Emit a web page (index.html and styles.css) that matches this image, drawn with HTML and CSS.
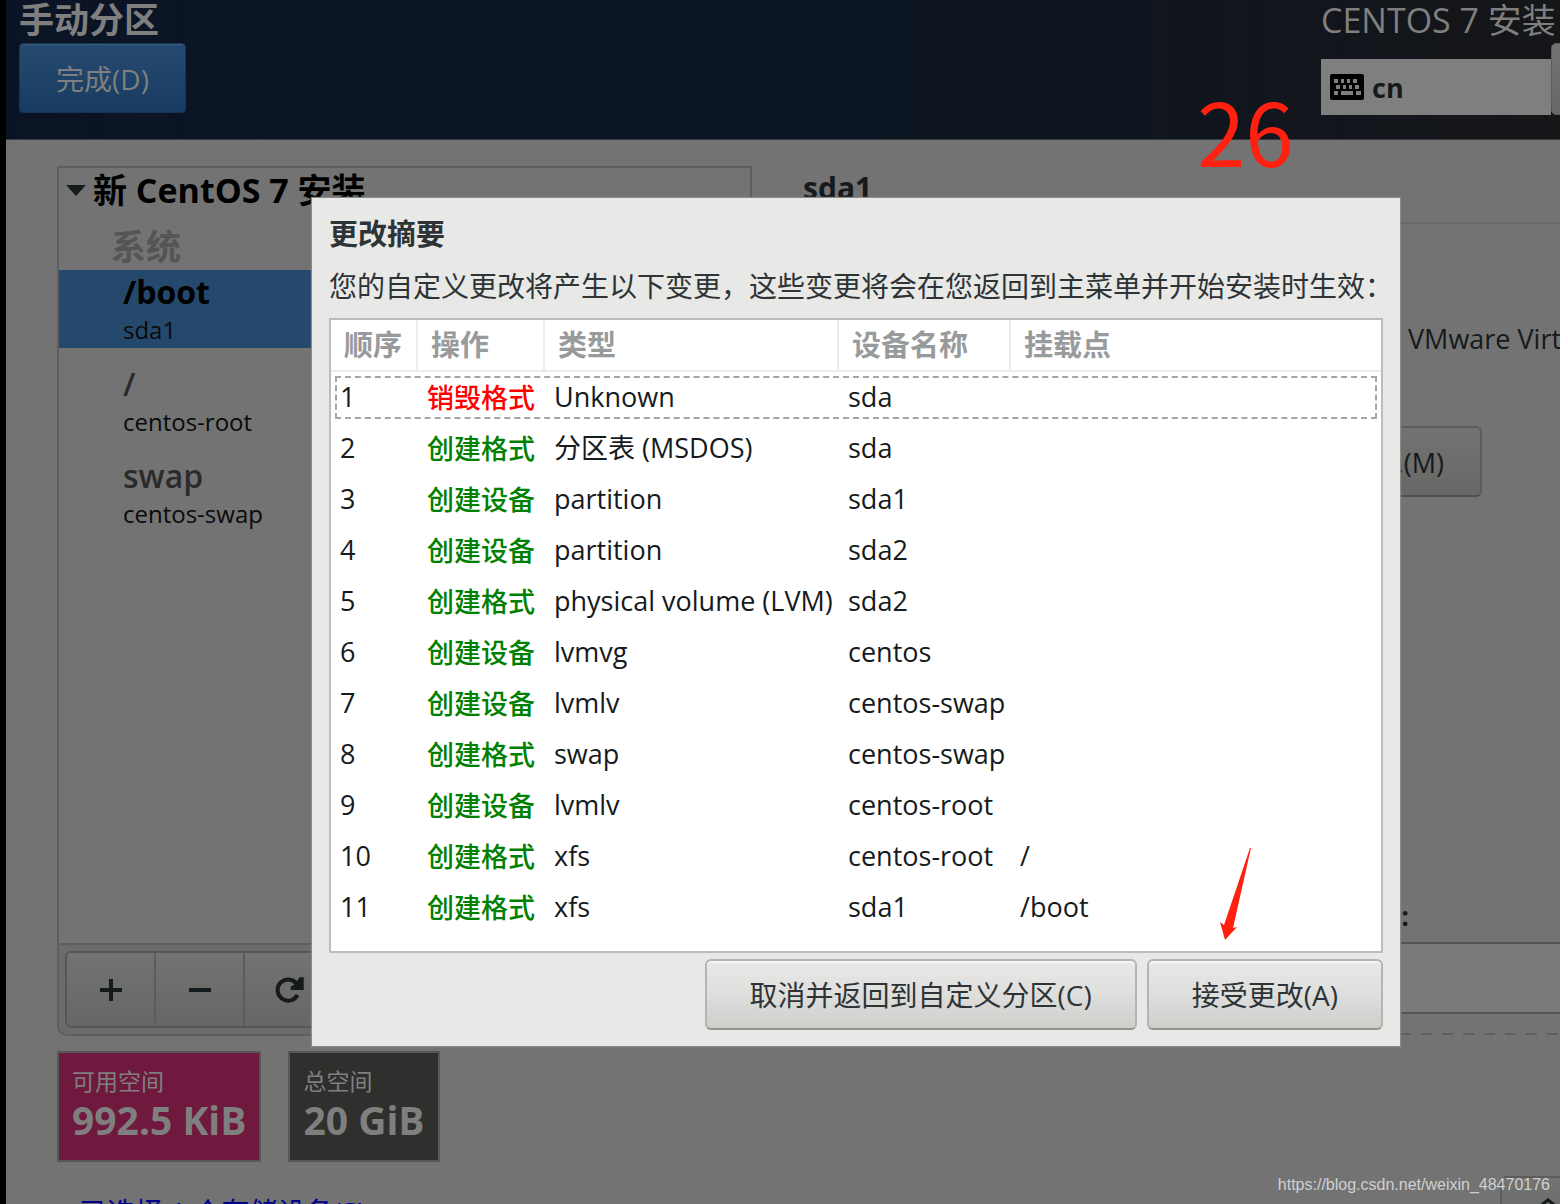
FILE: index.html
```html
<!DOCTYPE html>
<html lang="zh-CN">
<head>
<meta charset="utf-8">
<title>CentOS 7 安装</title>
<link rel="stylesheet" href="styles.css">
</head>
<body>
<div class="screen">
  <header class="topbar">
    <div class="topbar-left">
      <h1 class="topbar-title">手动分区</h1>
      <button class="done-button" type="button">完成(D)</button>
    </div>
    <div class="topbar-right">
      <p class="product">CENTOS 7 安装</p>
      <div class="topbar-tools">
        <div class="keyboard">
          <svg class="keyboard-icon" viewBox="0 0 34 26" aria-hidden="true">
            <rect width="34" height="26" rx="2" fill="#000"/>
            <path fill="#7f7f7f" d="M4 5h4v4H4zM11 5h3v4h-3zM17 5h3v4h-3zM23 5h4v4h-4zM6 11h4v4H6zM13 11h3v4h-3zM19 11h3v4h-3zM25 11h4v4h-4zM4 17h4v4H4zM11 17h12v4H11zM26 17h5v4h-5z"/>
          </svg>
          <span>cn</span>
        </div>
        <button class="help-button" type="button" aria-label="帮助"></button>
      </div>
    </div>
  </header>

  <main class="content">
    <section class="sidebar">
      <div class="tree">
        <h2 class="tree-root"><span class="expander"></span>新 CentOS 7 安装</h2>
        <h3 class="tree-group">系统</h3>
        <ul class="mounts">
          <li class="mount selected"><span class="mount-name">/boot</span><span class="mount-device">sda1</span></li>
          <li class="mount"><span class="mount-name">/</span><span class="mount-device">centos-root</span></li>
          <li class="mount"><span class="mount-name">swap</span><span class="mount-device">centos-swap</span></li>
        </ul>
      </div>
      <div class="toolbar">
        <div class="tool-group">
          <button class="tool" type="button" aria-label="添加">
            <svg width="24" height="24" viewBox="0 0 24 24"><path d="M12 1v22M1 12h22" stroke="#151a1c" stroke-width="4"/></svg>
          </button>
          <button class="tool" type="button" aria-label="删除">
            <svg width="24" height="24" viewBox="0 0 24 24"><path d="M1 12h22" stroke="#151a1c" stroke-width="4"/></svg>
          </button>
          <button class="tool" type="button" aria-label="刷新">
            <svg width="30" height="28" viewBox="0 0 30 28"><path d="M23.5 19A10.6 10.6 0 1 1 22.5 7.5" fill="none" stroke="#151a1c" stroke-width="4"/><path d="M25.7 1.3h4V14h-13v-3.3l4.3-2.7z" fill="#151a1c"/></svg>
          </button>
        </div>
      </div>
      <div class="spaces">
        <div class="space available"><span class="space-label">可用空间</span><strong class="space-value">992.5 KiB</strong></div>
        <div class="space total"><span class="space-label">总空间</span><strong class="space-value">20 GiB</strong></div>
      </div>
    </section>

    <section class="details">
      <h2 class="details-title">sda1</h2>
      <p class="details-device">VMware Virtual S</p>
      <button class="plain-button modify-button" type="button">修改...(M)</button>
      <label class="name-label" for="device-name">名称(N)&nbsp;:</label>
      <input class="name-input" id="device-name" type="text">
      <hr class="details-divider">
    </section>
  </main>

  <footer class="bottom">
    <a class="storage-link" href="#">已选择 1 个存储设备(S)</a>
    <button class="plain-button reset-button" type="button" aria-label="全部重设">
      <svg width="20" height="20" viewBox="0 0 20 20"><path d="M1 9l9-7 9 7" fill="none" stroke="#151a1c" stroke-width="3"/></svg>
    </button>
  </footer>

  <div class="dialog" role="dialog" aria-labelledby="dialog-title">
    <h2 class="dialog-title" id="dialog-title">更改摘要</h2>
    <p class="dialog-text">您的自定义更改将产生以下变更，这些变更将会在您返回到主菜单并开始安装时生效：</p>
    <div class="changes-box">
      <table class="changes">
        <colgroup><col class="col-order"><col class="col-action"><col class="col-type"><col class="col-device"><col></colgroup>
        <thead>
          <tr><th>顺序</th><th>操作</th><th>类型</th><th>设备名称</th><th>挂载点</th></tr>
        </thead>
        <tbody>
          <tr class="focused"><td>1</td><td class="destroy">销毁格式</td><td>Unknown</td><td>sda</td><td></td></tr>
          <tr><td>2</td><td class="create">创建格式</td><td>分区表 (MSDOS)</td><td>sda</td><td></td></tr>
          <tr><td>3</td><td class="create">创建设备</td><td>partition</td><td>sda1</td><td></td></tr>
          <tr><td>4</td><td class="create">创建设备</td><td>partition</td><td>sda2</td><td></td></tr>
          <tr><td>5</td><td class="create">创建格式</td><td>physical volume (LVM)</td><td>sda2</td><td></td></tr>
          <tr><td>6</td><td class="create">创建设备</td><td>lvmvg</td><td>centos</td><td></td></tr>
          <tr><td>7</td><td class="create">创建设备</td><td>lvmlv</td><td>centos-swap</td><td></td></tr>
          <tr><td>8</td><td class="create">创建格式</td><td>swap</td><td>centos-swap</td><td></td></tr>
          <tr><td>9</td><td class="create">创建设备</td><td>lvmlv</td><td>centos-root</td><td></td></tr>
          <tr><td>10</td><td class="create">创建格式</td><td>xfs</td><td>centos-root</td><td>/</td></tr>
          <tr><td>11</td><td class="create">创建格式</td><td>xfs</td><td>sda1</td><td>/boot</td></tr>
        </tbody>
      </table>
    </div>
    <div class="dialog-actions">
      <button class="dialog-button" type="button">取消并返回到自定义分区(C)</button>
      <button class="dialog-button" type="button">接受更改(A)</button>
    </div>
  </div>

  <span class="step-number">26</span>
  <svg class="step-arrow" viewBox="0 0 32 93" aria-hidden="true"><path d="M36 0h1L19 80l4-1L11 92 6 74l4 3z" transform="translate(-6)" fill="#ff2010"/></svg>
  <span class="watermark">https://blog.csdn.net/weixin_48470176</span>
</div>
</body>
</html>
```

FILE: styles.css
```css
* {
  box-sizing: border-box;
}

body,
h1,
h2,
h3,
p,
ul {
  margin: 0;
  padding: 0;
}

body {
  font-family: "Open Sans", "Noto Sans CJK SC", sans-serif;
  font-size: 27px;
  color: #151a1c;
  background: #737373;
}

button,
input {
  font: inherit;
  color: inherit;
}

.screen {
  position: relative;
  height: 100vh;
  overflow: hidden;
  border-left: 6px solid #000;
}

/* Top bar */
.topbar {
  display: flex;
  justify-content: space-between;
  height: 140px;
  padding-left: 13px;
  background:
    repeating-linear-gradient(90deg, rgba(0, 0, 0, 0.05) 0 5px, transparent 24px 83px),
    linear-gradient(90deg, #0a1424 0%, #0a1626 45%, #10151e 75%, #151618 100%);
  border-bottom: 1px solid #393b3e;
}

.topbar-title {
  height: 43px;
  font-size: 35px;
  line-height: 39px;
  color: #7f7f7f;
}

.done-button {
  display: block;
  width: 167px;
  height: 70px;
  border: 1px solid #173657;
  border-radius: 4px;
  background: linear-gradient(#274b70, #163a61);
  box-shadow: inset 0 1px #3c5c7e;
  font-size: 28px;
  color: #7f7f7f;
}

.topbar-right {
  width: 239px;
  color: #7f7f7f;
}

.product {
  height: 43px;
  font-size: 34px;
  line-height: 40px;
  white-space: nowrap;
}

.topbar-tools {
  display: flex;
  align-items: flex-end;
}

.keyboard {
  display: flex;
  flex: 0 0 230px;
  align-items: center;
  gap: 8px;
  height: 56px;
  padding-left: 9px;
  background: #7f7f7f;
  color: #151a1c;
  font-weight: 700;
}

.keyboard-icon {
  width: 34px;
  height: 26px;
}

.help-button {
  flex: 0 0 90px;
  height: 72px;
  border: 1px solid #5c5c5b;
  border-radius: 5px;
  background: linear-gradient(#737372, #676765);
}

/* Partition list */
.content {
  display: flex;
  gap: 18px;
  padding: 26px 0 0 51px;
}

.sidebar {
  flex: 0 0 695px;
}

.tree {
  height: 779px;
  border: 2px solid #5e5e5d;
}

.tree-root {
  display: flex;
  align-items: center;
  gap: 7px;
  padding-left: 7px;
  font-size: 34px;
  line-height: 44px;
  color: #000;
}

.expander {
  border: 10px solid transparent;
  border-top: 11px solid #151a1c;
  border-bottom: 0;
}

.tree-group {
  padding: 11px 0 0 52px;
  font-size: 35px;
  line-height: 47px;
  color: #555;
}

.mounts {
  display: flex;
  flex-direction: column;
  gap: 14px;
  list-style: none;
}

.mount {
  display: flex;
  flex-direction: column;
  padding-left: 64px;
}

.mount.selected {
  background: #25496d;
}

.mount-name {
  font-size: 32px;
  font-weight: 600;
  line-height: 44px;
  color: #2b2b2b;
}

.mount-device {
  padding-bottom: 2px;
  font-size: 24px;
  line-height: 32px;
  color: #0a0a0a;
}

.selected .mount-name {
  font-weight: 700;
  color: #000;
}

.toolbar {
  height: 91px;
  padding: 6px;
  border: 2px solid #5e5e5d;
  border-top: 0;
  border-radius: 0 0 10px 10px;
  background: #6b6b69;
}

.tool-group {
  display: inline-flex;
  border: 2px solid #565655;
  border-radius: 6px;
  overflow: hidden;
}

.tool {
  display: flex;
  align-items: center;
  justify-content: center;
  width: 89px;
  height: 73px;
  padding: 0;
  border: 0;
  border-right: 2px solid #5c5c5b;
  background: linear-gradient(#737372, #666664);
}

.spaces {
  display: flex;
  gap: 27px;
  padding-top: 15px;
}

.space {
  display: flex;
  flex-direction: column;
  height: 111px;
  padding: 12px 13px;
  border: 2px solid #575756;
  color: #7f7f7f;
}

.available {
  background: #70193e;
}

.total {
  background: #2f2f2d;
}

.space-label {
  font-size: 23px;
  line-height: 32px;
}

.space-value {
  font-size: 39px;
  line-height: 46px;
}

/* Device details */
.details {
  display: flex;
  flex: 1;
  flex-direction: column;
  min-width: 0;
}

.details-title {
  height: 58px;
  padding-left: 33px;
  border-bottom: 2px solid #696968;
  font-size: 30px;
  line-height: 44px;
}

.details-device {
  align-self: flex-end;
  width: 152px;
  margin-top: 95px;
  overflow: hidden;
  line-height: 40px;
  white-space: nowrap;
}

.plain-button {
  height: 71px;
  padding: 0 36px;
  border: 2px solid #5c5c5b;
  border-bottom-color: #4f4f4d;
  border-radius: 6px;
  background: linear-gradient(#737372, #676765);
}

.modify-button {
  align-self: flex-end;
  margin: 67px 78px 0 0;
}

.name-label {
  align-self: flex-end;
  margin: 399px 151px 0 0;
  font-weight: 700;
  line-height: 40px;
}

.name-input {
  width: 100%;
  height: 72px;
  margin-top: 6px;
  border: solid #555;
  border-width: 2px 0;
  background: #797979;
}

.details-divider {
  width: 100%;
  height: 2px;
  margin: 19px 0 0;
  border: 0;
  background: repeating-linear-gradient(90deg, #606060 0 11px, transparent 11px 21px);
}

/* Footer */
.bottom {
  display: flex;
  align-items: flex-start;
  justify-content: space-between;
  padding: 14px 0 0 73px;
}

.storage-link {
  padding-top: 15px;
  font-size: 28px;
  color: #00008b;
  text-decoration: none;
}

.reset-button {
  display: flex;
  align-items: flex-start;
  width: 60px;
  padding: 20px 0 0 36px;
  border-right: 0;
  border-radius: 6px 0 0 6px;
}

/* Summary dialog */
.dialog {
  position: absolute;
  top: 198px;
  left: 306px;
  right: 160px;
  padding: 16px 17px;
  background: #e8e8e6;
  box-shadow: 0 0 1px 1px #8a8a88;
  color: #2e3436;
}

.dialog-title {
  font-size: 29px;
  line-height: 40px;
}

.dialog-text {
  font-size: 28px;
  line-height: 64px;
  white-space: nowrap;
}

.changes-box {
  padding-bottom: 18px;
  border: 2px solid #bcbcba;
  background: #fff;
}

.changes {
  width: 100%;
  table-layout: fixed;
  border-collapse: separate;
  border-spacing: 0;
  color: #151a1c;
}

.col-order {
  width: 87px;
}

.col-action {
  width: 127px;
}

.col-type {
  width: 294px;
}

.col-device {
  width: 172px;
}

.changes th {
  height: 52px;
  padding: 0 0 0 13px;
  border-right: 2px solid #ececeb;
  border-bottom: 2px solid #ececeb;
  font-size: 29px;
  line-height: 40px;
  text-align: left;
  color: #989b9c;
}

.changes th:last-child {
  border-right: 0;
}

.changes td {
  height: 51px;
  padding: 0 0 2px 9px;
  line-height: 40px;
  white-space: nowrap;
}

.changes .focused {
  outline: 2px dashed #a5a5a5;
  outline-offset: -6px;
}

.changes .destroy,
.changes .create {
  padding-bottom: 0;
  font-weight: 500;
}

.changes .destroy {
  color: #f00;
}

.changes .create {
  color: #008000;
}

.dialog-actions {
  display: flex;
  justify-content: flex-end;
  gap: 10px;
  padding-top: 6px;
}

.dialog-button {
  height: 71px;
  padding: 0 43px 2px;
  border: 2px solid #b4b4b2;
  border-bottom-color: #93938f;
  border-radius: 6px;
  background: linear-gradient(#e9e9e7, #dededc 50%, #cececb);
  box-shadow: inset 0 2px #f5f5f4;
  font-size: 28px;
}

/* Marks over the screen */
.step-number {
  position: absolute;
  top: 86px;
  left: 1191px;
  font-family: "Noto Sans CJK SC", sans-serif;
  font-size: 87px;
  line-height: 87px;
  color: #ff2010;
}

.step-arrow {
  position: absolute;
  top: 848px;
  left: 1214px;
  width: 32px;
  height: 93px;
}

.watermark {
  position: absolute;
  right: 10px;
  bottom: 8px;
  font-family: "Liberation Sans", Arial, sans-serif;
  font-size: 16px;
  line-height: 22px;
  color: #d0d0d0;
}
```
